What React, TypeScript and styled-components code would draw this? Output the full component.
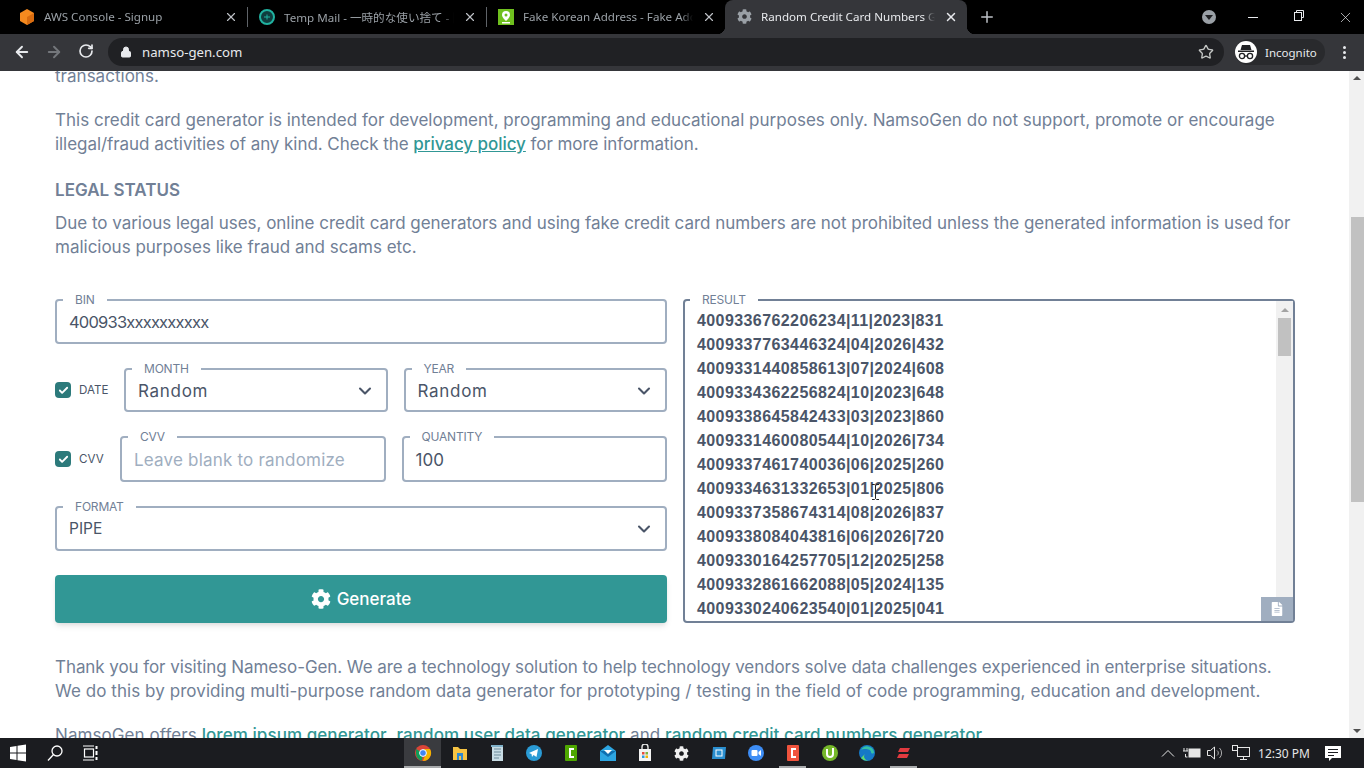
import React from "react";
import styled, { createGlobalStyle } from "styled-components";
import { ArrowLeft, ArrowRight, RotateCw, Lock, Star, X, Plus, ChevronDown, Check } from "lucide-react";
import { FaCog, FaFileAlt } from "react-icons/fa";

const Global = createGlobalStyle`
  html, body { margin: 0; padding: 0; height: 100%; overflow: hidden; background: #fff; }
  * { box-sizing: border-box; }
  body { font-family: Inter, "Liberation Sans", sans-serif; }
`;

const Screen = styled.div`display:flex;flex-direction:column;height:768px;width:1364px;overflow:hidden;`;

/* ---------- browser chrome ---------- */
const TabStrip = styled.div`display:flex;height:34px;background:#000;padding-left:8px;align-items:stretch;flex:none;`;
const Tab = styled.div<{ $active?: boolean; $w: number }>`
  position:relative;display:flex;align-items:center;gap:9px;width:${p => p.$w}px;padding:0 9px 1px 11px;
  background:${p => (p.$active ? "#35363a" : "transparent")};
  border-radius:${p => (p.$active ? "8px 8px 0 0" : "0")};
  color:${p => (p.$active ? "#e8eaed" : "#9aa0a6")};
  font:11.6px "Noto Sans","Noto Sans CJK JP",sans-serif;
  ${p => (p.$active ? `
    &::before,&::after{content:"";position:absolute;bottom:0;width:8px;height:8px;}
    &::before{left:-8px;background:radial-gradient(circle at 0 0,#000 8px,#35363a 8.5px);}
    &::after{right:-8px;background:radial-gradient(circle at 100% 0,#000 8px,#35363a 8.5px);}
  ` : "")}
`;
const TabSep = styled.div`width:1px;height:20px;background:#5f6368;align-self:center;flex:none;`;
const Fav = styled.span`width:16px;height:16px;flex:none;display:flex;align-items:center;justify-content:center;`;
const TabTitle = styled.span`
  flex:1;white-space:nowrap;overflow:hidden;
  -webkit-mask-image:linear-gradient(90deg,#000 93%,transparent);mask-image:linear-gradient(90deg,#000 93%,transparent);
`;
const TabClose = styled.span<{ $active?: boolean }>`display:flex;color:${p => (p.$active ? "#e8eaed" : "#bdc1c6")};flex:none;`;
const NewTab = styled.span`display:flex;align-items:center;margin-left:11px;color:#bdc1c6;`;
const StripRight = styled.div`margin-left:auto;display:flex;align-items:center;padding-left:4px;`;
const CaretCircle = styled.span`
  width:14px;height:14px;border-radius:50%;background:#9aa0a6;display:flex;align-items:center;justify-content:center;margin-right:14px;
  &::after{content:"";border:4px solid transparent;border-top:5px solid #202124;margin-top:4px;}
`;
const WinBtn = styled.span<{ $last?: boolean }>`
  width:46px;height:34px;display:flex;align-items:flex-start;padding-top:9px;justify-content:center;color:#e8eaed;
  ${p => (p.$last ? "margin-right:-4px;" : "")}
`;

const Toolbar = styled.div`display:flex;align-items:center;height:37px;padding-bottom:1px;background:#35363a;flex:none;`;
const NavBtn = styled.span<{ $dim?: boolean }>`width:32px;display:flex;justify-content:center;color:${p => (p.$dim ? "#74777b" : "#e8eaed")};`;
const NavGroup = styled.div`display:flex;padding-left:6px;width:108px;`;
const Omnibox = styled.div`
  width:1116px;height:28px;border-radius:14px;background:#202124;display:flex;align-items:center;padding:0 10px 0 12px;gap:10px;
  color:#e8eaed;font:13.2px "Noto Sans",sans-serif;
`;
const Url = styled.span`flex:1;`;
const Pill = styled.div`
  margin-left:11px;width:90px;height:26px;border-radius:13px;background:#292a2d;display:flex;align-items:center;gap:8px;padding-left:0;
  color:#e8eaed;font:11.5px "Noto Sans",sans-serif;
`;
const Avatar = styled.span`width:22px;height:22px;border-radius:50%;background:#fff;display:flex;align-items:center;justify-content:center;flex:none;`;
const Dots = styled.span`
  margin-left:18px;display:flex;flex-direction:column;gap:2px;
  i{width:3px;height:3px;border-radius:50%;background:#e8eaed;display:block;}
`;

/* ---------- page ---------- */
const Viewport = styled.div`flex:1;display:flex;min-height:0;background:#fff;`;
const Page = styled.main`
  flex:1;min-width:0;overflow:hidden;padding:0 54px 0 55px;color:#718096;
  font:17px/24px Inter,"Liberation Sans",sans-serif;letter-spacing:.02px;
`;
const Para = styled.p<{ $top?: number }>`margin:${p => p.$top ?? 0}px 0 0;white-space:nowrap;`;
const Line = styled.span<{ $ls: number }>`display:block;letter-spacing:${p => p.$ls}px;`;
const FirstPara = styled(Para)`margin-top:-7px;`;
const Heading = styled.h3`margin:22px 0 0;font-size:17px;line-height:24px;font-weight:600;color:#718096;`;
const Link = styled.a`color:#319795;font-weight:500;text-decoration:underline;`;

const FormGrid = styled.div`display:grid;grid-template-columns:612px 612px;column-gap:16px;margin-top:40px;`;
const LeftCol = styled.div`display:flex;flex-direction:column;gap:24px;`;
const Row = styled.div`display:flex;align-items:center;`;
const CheckWrap = styled.label`
  display:flex;align-items:center;gap:8px;color:#4a5568;font-size:11.6px;letter-spacing:0;flex:none;
`;
const DateCheck = styled(CheckWrap)`width:69px;`;
const CvvCheck = styled(CheckWrap)`width:65px;`;
const Box = styled.span`width:16px;height:16px;border-radius:4px;background:#2c7a7b;display:flex;align-items:center;justify-content:center;color:#fff;flex:none;`;
const Pair = styled.div`flex:1;display:flex;gap:16px;min-width:0;`;
const Field = styled.div<{ $h: number }>`
  position:relative;flex:1;min-width:0;height:${p => p.$h}px;border:2px solid #a0aec0;border-radius:4px;
  display:flex;align-items:center;padding:1px 12px 0;background:#fff;color:#4a5568;
`;
const Label = styled.span<{ $left?: number }>`
  position:absolute;top:-7px;left:${p => p.$left ?? 6}px;padding:0 12px;background:#fff;color:#718096;
  font-size:12px;line-height:12px;letter-spacing:-.2px;
`;
const Value = styled.span`flex:1;`;
const BinValue = styled(Value)`font-size:16.5px;letter-spacing:-.8px;`;
const SelectValue = styled(Value)`letter-spacing:.7px;`;
const Small = styled(Value)`font-size:15.5px;`;
const Placeholder = styled(Value)`color:#a0aec0;letter-spacing:.2px;`;
const Chevron = styled.span`display:flex;color:#4a5568;margin-right:-1px;`;
const GenerateBtn = styled.button`
  height:48px;border:0;border-radius:4px;background:#319795;color:#fff;display:flex;align-items:center;justify-content:center;gap:6px;
  font:500 17px Inter,sans-serif;box-shadow:0 4px 6px -1px rgba(0,0,0,.1),0 2px 4px -1px rgba(0,0,0,.06);
`;
const ResultBox = styled.div`
  position:relative;height:324px;border:2px solid #718096;border-radius:4px;display:flex;background:#fff;
`;
const ResultLines = styled.div`
  flex:1;padding:8px 0 0 12px;height:320px;overflow:hidden;color:#4a5568;
  font:700 16px/24px "Liberation Sans",Arial,sans-serif;letter-spacing:.41px;
`;
const InnerBar = styled.div`width:17px;background:#f1f1f1;display:flex;flex-direction:column;align-items:center;`;
const ArrowUp = styled.span`margin-top:7px;border:4px solid transparent;border-top:0;border-bottom:4px solid #a3a3a3;`;
const InnerThumb = styled.div`width:13px;height:38px;background:#c1c1c1;margin-top:6px;`;
const CopyBtn = styled.span`
  position:absolute;right:0;bottom:0;width:32px;height:24px;background:#a0aec0;color:#fff;display:flex;align-items:center;justify-content:center;
`;
const Cursor = styled.svg`position:absolute;left:186px;top:183px;`;
const PageBar = styled.div`width:15px;background:#f1f1f1;display:flex;flex-direction:column;align-items:flex-end;flex:none;`;
const PageArrow = styled.span`margin:5px 3px 0 0;border:4px solid transparent;border-top:0;border-bottom:4px solid #505050;`;
const PageThumb = styled.div`width:13px;height:285px;background:#c1c1c1;margin-top:137px;`;
const PageArrowDown = styled.span`margin:auto 3px 5px 0;border:4px solid transparent;border-bottom:0;border-top:4px solid #505050;`;

/* ---------- taskbar ---------- */
const Taskbar = styled.footer`height:30px;background:#1b1c20;display:flex;align-items:center;flex:none;color:#fff;`;
const StartArea = styled.div`display:flex;align-items:center;width:404px;`;
const StartBtn = styled.span<{ $w: number }>`width:${p => p.$w}px;height:30px;display:flex;align-items:center;justify-content:center;`;
const Slot = styled.span<{ $active?: boolean; $open?: boolean }>`
  position:relative;width:37px;height:30px;display:flex;align-items:center;justify-content:center;
  background:${p => (p.$active ? "#3a3b3f" : "transparent")};
  ${p => (p.$active || p.$open ? `&::after{content:"";position:absolute;left:${p.$active ? 0 : 5}px;right:${p.$active ? 0 : 5}px;bottom:0;height:2px;background:#a9abad;}` : "")}
`;
const Tray = styled.div`margin-left:auto;display:flex;align-items:center;height:30px;color:#e6e6e6;padding-right:18px;`;
const TrayIcon = styled.span<{ $w: number }>`width:${p => p.$w}px;display:flex;justify-content:center;`;
const Clock = styled.span`font:12px "Noto Sans",sans-serif;width:62px;text-align:center;margin:0 5px 0 -3px;white-space:nowrap;`;

const cards = [
  "4009336762206234|11|2023|831","4009337763446324|04|2026|432","4009331440858613|07|2024|608",
  "4009334362256824|10|2023|648","4009338645842433|03|2023|860","4009331460080544|10|2026|734",
  "4009337461740036|06|2025|260","4009334631332653|01|2025|806","4009337358674314|08|2026|837",
  "4009338084043816|06|2026|720","4009330164257705|12|2025|258","4009332861662088|05|2024|135",
  "4009330240623540|01|2025|041",
];

const S = ({ children }: { children: React.ReactNode }) => (
  <svg width={18} height={18} viewBox="0 0 18 18">{children}</svg>
);

const taskIcons: { k: string; active?: boolean; open?: boolean; el: React.ReactNode }[] = [
  { k: "chrome", active: true, el: <S><circle cx="9" cy="9" r="8" fill="#db4437"/><path d="M9 9 2 5v4a8 8 0 0 0 6 7.8z" fill="#0f9d58"/><path d="M9 5h7a8 8 0 0 1-7 12l3-8z" fill="#f4b400"/><circle cx="9" cy="9" r="3.4" fill="#4285f4" stroke="#fff"/></S> },
  { k: "folder", el: <S><path d="M2 3h5l2 2h7v11H2z" fill="#f6c343"/><rect x="6" y="9" width="6" height="7" fill="#2f88d0"/><rect x="8" y="12" width="2" height="4" fill="#f6c343"/></S> },
  { k: "notepad", el: <S><rect x="4" y="2" width="11" height="15" fill="#c8dce4"/><path d="M6 5h7M6 8h7M6 11h7M6 14h5" stroke="#6d8a99"/><rect x="3" y="1" width="12" height="2" fill="#7fb0c8"/></S> },
  { k: "telegram", el: <S><circle cx="9" cy="9" r="8" fill="#2a9bd5"/><path d="M4 9l9-4-1.500 8-3-2-1.500 2-.5-3z" fill="#fff"/></S> },
  { k: "cgreen", el: <S><rect x="3" y="1" width="12" height="16" rx="1" fill="#4ea700"/><path d="M12 5H8v8h4" fill="none" stroke="#fff" strokeWidth="2"/></S> },
  { k: "mail", el: <S><path d="M1 7 9 1l8 6v10H1z" fill="#2da5e1"/><path d="M1 7l8 6 8-6" fill="#0e6fb0"/><path d="M5 6h8l-4 4z" fill="#fff"/></S> },
  { k: "store", el: <S><path d="M6 6V3a3 3 0 0 1 6 0v3" fill="none" stroke="#e6e6e6" strokeWidth="1.400"/><rect x="3" y="5" width="12" height="12" fill="#f3f3f3"/><rect x="6" y="8" width="2.500" height="2.500" fill="#e74c3c"/><rect x="9.500" y="8" width="2.500" height="2.500" fill="#7cb342"/><rect x="6" y="11.500" width="2.500" height="2.500" fill="#2c9ae0"/><rect x="9.500" y="11.500" width="2.500" height="2.500" fill="#f4b400"/></S> },
  { k: "gear", el: <FaCog size={15} color="#f0f0f0"/> },
  { k: "blue", el: <S><path d="M3 3h13l-1 12H2z" fill="#2a8fd0"/><rect x="6" y="6" width="6" height="6" fill="none" stroke="#fff"/></S> },
  { k: "zoom", el: <S><circle cx="9" cy="9" r="8" fill="#3d8df5"/><rect x="4.500" y="6" width="6" height="6" rx="1" fill="#fff"/><path d="M11.500 8l2.500-2v6l-2.500-2z" fill="#fff"/></S> },
  { k: "cred", open: true, el: <S><rect x="3" y="1" width="12" height="16" rx="1" fill="#f0533d"/><path d="M12 5H8v8h4" fill="none" stroke="#fff" strokeWidth="2"/></S> },
  { k: "utorrent", el: <S><circle cx="9" cy="9" r="8" fill="#76b82a"/><path d="M6 5v5a3 3 0 0 0 6 0V4" fill="none" stroke="#fff" strokeWidth="2"/></S> },
  { k: "edge", el: <S><circle cx="9" cy="9" r="8" fill="#1579c6"/><path d="M3 6a7 7 0 0 1 13 2c0 2-3 2-3 0 0-3-7-4-10-2z" fill="#35c1a6"/><path d="M7 10a4 4 0 0 0 5 6 8 8 0 0 1-9-2z" fill="#5fdc6e"/></S> },
  { k: "red", open: true, el: <S><path d="M5 4h10l-2 4H3zM4 10h10l-2 4H2z" fill="#e23a3f"/></S> },
];

const Incog = () => (
  <svg width="18" height="16" viewBox="0 0 18 16">
    <path d="M5 1h8l1.500 5h-11z" fill="#202124"/><rect x="1" y="6.500" width="16" height="1.500" fill="#202124"/>
    <circle cx="5" cy="12" r="2.600" fill="none" stroke="#202124" strokeWidth="1.300"/>
    <circle cx="13" cy="12" r="2.600" fill="none" stroke="#202124" strokeWidth="1.300"/>
    <path d="M7.500 12h3" stroke="#202124" strokeWidth="1.300"/>
  </svg>
);

export default function App() {
  return (
    <Screen>
      <Global />
      <TabStrip>
        <Tab $w={239}>
          <Fav><svg width="16" height="16" viewBox="0 0 16 16"><path d="M8 0l7 4v8l-7 4-7-4V4z" fill="#f58a1f"/><path d="M8 8l7-4v8l-7 4z" fill="#d96c10"/></svg></Fav>
          <TabTitle>AWS Console - Signup</TabTitle>
          <TabClose><X size={14} /></TabClose>
        </Tab>
        <TabSep />
        <Tab $w={238}>
          <Fav><svg width="16" height="16" viewBox="0 0 16 16"><circle cx="8" cy="8" r="7" fill="#0f3d3e" stroke="#20b2a0" strokeWidth="2"/><path d="M5 8h6M8 5.500v5" stroke="#20b2a0"/></svg></Fav>
          <TabTitle>Temp Mail - 一時的な使い捨て - 匿名</TabTitle>
          <TabClose><X size={14} /></TabClose>
        </Tab>
        <TabSep />
        <Tab $w={238}>
          <Fav><svg width="16" height="16" viewBox="0 0 16 16"><rect width="16" height="16" fill="#6fc01e"/><path d="M8 2a4 4 0 0 1 4 4c0 2.500-4 6-4 6S4 8.500 4 6a4 4 0 0 1 4-4z" fill="#fff"/><circle cx="8" cy="6" r="1.500" fill="#6fc01e"/><rect x="4" y="13" width="8" height="1.500" fill="#fff"/></svg></Fav>
          <TabTitle>Fake Korean Address - Fake Address</TabTitle>
          <TabClose><X size={14} /></TabClose>
        </Tab>
        <Tab $w={242} $active>
          <Fav><FaCog size={15} color="#9aa0a6" /></Fav>
          <TabTitle>Random Credit Card Numbers Generator</TabTitle>
          <TabClose $active><X size={14} strokeWidth={2.500} /></TabClose>
        </Tab>
        <NewTab><Plus size={18} /></NewTab>
        <StripRight>
          <CaretCircle />
          <WinBtn><svg width="12" height="16" viewBox="0 0 12 16" stroke="#e8eaed"><path d="M1 8.500h10"/></svg></WinBtn>
          <WinBtn>
            <svg width="12" height="12" viewBox="0 0 12 12" fill="none" stroke="#e8eaed"><rect x="1.500" y="3.500" width="7" height="8"/><path d="M3.500 3.500v-2h7v7h-2"/></svg>
          </WinBtn>
          <WinBtn $last><X size={17} strokeWidth={1} /></WinBtn>
        </StripRight>
      </TabStrip>

      <Toolbar>
        <NavGroup>
          <NavBtn><ArrowLeft size={18} strokeWidth={2.500} /></NavBtn>
          <NavBtn $dim><ArrowRight size={18} strokeWidth={2.500} /></NavBtn>
          <NavBtn><RotateCw size={16} strokeWidth={2.500} /></NavBtn>
        </NavGroup>
        <Omnibox>
          <Lock size={12} fill="#e8eaed" />
          <Url>namso-gen.com</Url>
          <Star size={16} color="#c4c7c5" />
        </Omnibox>
        <Pill>
          <Avatar><Incog /></Avatar>
          Incognito
        </Pill>
        <Dots><i /><i /><i /></Dots>
      </Toolbar>

      <Viewport>
        <Page>
          <FirstPara>transactions.</FirstPara>
          <Para $top={20}>
            <Line $ls={0.02}>This credit card generator is intended for development, programming and educational purposes only. NamsoGen do not support, promote or encourage</Line>
            <Line $ls={-0.055}>illegal/fraud activities of any kind. Check the <Link>privacy policy</Link> for more information.</Line>
          </Para>
          <Heading>LEGAL STATUS</Heading>
          <Para $top={9}>
            <Line $ls={-0.02}>Due to various legal uses, online credit card generators and using fake credit card numbers are not prohibited unless the generated information is used for</Line>
            <Line $ls={-0.01}>malicious purposes like fraud and scams etc.</Line>
          </Para>
          <FormGrid>
            <LeftCol>
              <Field $h={46}><Label>BIN</Label><BinValue>400933xxxxxxxxxx</BinValue></Field>
              <Row>
                <DateCheck><Box><Check size={11} strokeWidth={4} /></Box>DATE</DateCheck>
                <Pair>
                  <Field $h={44}><Label>MONTH</Label><SelectValue>Random</SelectValue><Chevron><ChevronDown size={20} strokeWidth={2.500} /></Chevron></Field>
                  <Field $h={44}><Label>YEAR</Label><SelectValue>Random</SelectValue><Chevron><ChevronDown size={20} strokeWidth={2.500} /></Chevron></Field>
                </Pair>
              </Row>
              <Row>
                <CvvCheck><Box><Check size={11} strokeWidth={4} /></Box>CVV</CvvCheck>
                <Pair>
                  <Field $h={46}><Label>CVV</Label><Placeholder>Leave blank to randomize</Placeholder></Field>
                  <Field $h={46}><Label>QUANTITY</Label><Value>100</Value></Field>
                </Pair>
              </Row>
              <Field $h={44}><Label>FORMAT</Label><Small>PIPE</Small><Chevron><ChevronDown size={20} strokeWidth={2.500} /></Chevron></Field>
              <GenerateBtn><FaCog size={20} />Generate</GenerateBtn>
            </LeftCol>
            <ResultBox>
              <Label $left={5}>RESULT</Label>
              <ResultLines>{cards.map(c => <div key={c}>{c}</div>)}</ResultLines>
              <InnerBar><ArrowUp /><InnerThumb /></InnerBar>
              <CopyBtn><FaFileAlt size={14} /></CopyBtn>
              <Cursor width="9" height="16" viewBox="0 0 9 16" fill="none" stroke="#222"><path d="M1 .5h2.500L4.500 1.500 5.500.5H8M4.500 1.500v13M1 15.500h2.500l1-1 1 1H8"/></Cursor>
            </ResultBox>
          </FormGrid>
          <Para $top={32}>
            <Line $ls={-0.07}>Thank you for visiting Nameso-Gen. We are a technology solution to help technology vendors solve data challenges experienced in enterprise situations.</Line>
            <Line $ls={0.06}>We do this by providing multi-purpose random data generator for prototyping / testing in the field of code programming, education and development.</Line>
          </Para>
          <Para $top={20}>
            <Line $ls={0.07}>NamsoGen offers <Link>lorem ipsum generator</Link>, <Link>random user data generator</Link> and <Link>random credit card numbers generator</Link>.</Line>
          </Para>
        </Page>
        <PageBar><PageArrow /><PageThumb /><PageArrowDown /></PageBar>
      </Viewport>

      <Taskbar>
        <StartArea>
          <StartBtn $w={35}><svg width="18" height="18" viewBox="0 0 18 18" fill="#fff"><path d="M1 3l6.500-1v6.500H1zM8.500 1.800L17 .5v8H8.500zM1 9.500h6.500V16L1 15zM8.500 9.500H17v8l-8.500-1.300z"/></svg></StartBtn>
          <StartBtn $w={40}><svg width="18" height="18" viewBox="0 0 18 18" fill="none" stroke="#fff" strokeWidth="1.300"><circle cx="11" cy="7" r="5"/><path d="M7.500 10.500 2 16.500"/></svg></StartBtn>
          <StartBtn $w={29}><svg width="18" height="18" viewBox="0 0 18 18" fill="none" stroke="#fff" strokeWidth="1.200"><rect x="3.500" y="5" width="9" height="8"/><path d="M2 2h11M2 16h11"/><path d="M15.500 2v3M15.500 7v4M15.500 13v3" strokeWidth="2"/></svg></StartBtn>
        </StartArea>
        {taskIcons.map(t => <Slot key={t.k} $active={t.active} $open={t.open}>{t.el}</Slot>)}
        <Tray>
          <TrayIcon $w={24}><svg width="14" height="8" viewBox="0 0 14 8" fill="none" stroke="currentColor"><path d="M1 7.500l6-6 6 6"/></svg></TrayIcon>
          <TrayIcon $w={24}><svg width="18" height="14" viewBox="0 0 18 14" fill="none" stroke="currentColor"><path d="M1 2v3M4 2v3M0 5h5M2.500 8v3M2.500 11h2"/><rect x="6" y="3" width="11" height="8" fill="currentColor"/></svg></TrayIcon>
          <TrayIcon $w={22}><svg width="18" height="16" viewBox="0 0 18 16" fill="none" stroke="currentColor"><path d="M1.500 5.500h3l4-3.500v12l-4-3.500h-3z"/><path d="M11 5.500a3 3 0 0 1 0 5M13.500 3a7 7 0 0 1 0 10" opacity=".7"/></svg></TrayIcon>
          <TrayIcon $w={30}><svg width="20" height="18" viewBox="0 0 20 18" fill="none" stroke="currentColor"><rect x="6.500" y="3.500" width="12" height="9"/><path d="M12.500 12.500v3M9 15.500h7"/><rect x="1.500" y="1.500" width="5" height="5" fill="#1b1c20"/></svg></TrayIcon>
          <Clock>12:30 PM</Clock>
          <TrayIcon $w={26}><svg width="18" height="17" viewBox="0 0 18 17"><path d="M1 1h16v12H8l-3 3v-3H1z" fill="#fff"/><path d="M4 4.500h10M4 7.500h10M4 10.500h6" stroke="#1b1c20"/></svg></TrayIcon>
        </Tray>
      </Taskbar>
    </Screen>
  );
}
